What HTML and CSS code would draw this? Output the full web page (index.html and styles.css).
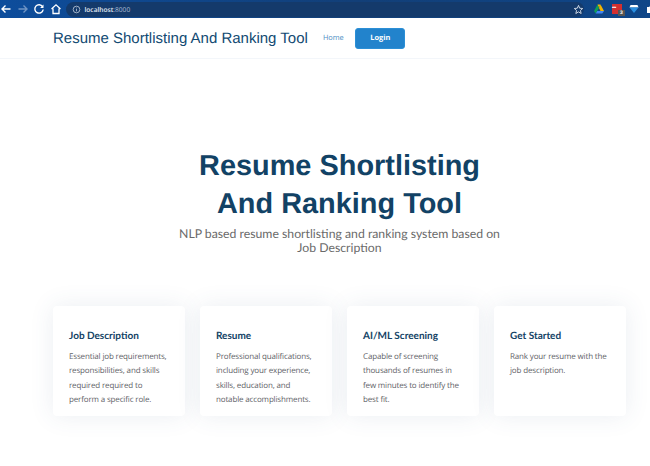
FILE: index.html
```html
<!DOCTYPE html>
<html lang="en">
<head>
<meta charset="utf-8">
<title>Resume Shortlisting And Ranking Tool</title>
<link rel="stylesheet" href="styles.css">
</head>
<body>
<div class="chrome">
  <svg class="ico" viewBox="0 0 12 12"><path d="M10.500 6H2M5.500 2.500 2 6l3.500 3.500" fill="none" stroke="#fff" stroke-width="1.400"/></svg>
  <svg class="ico" viewBox="0 0 12 12"><path d="M1.500 6H10M6.500 2.500 10 6l-3.500 3.500" fill="none" stroke="#6f94c4" stroke-width="1.400"/></svg>
  <svg class="ico" viewBox="0 0 12 12"><path d="M9.600 3.700A4.200 4.200 0 1 0 10.200 6.500" fill="none" stroke="#fff" stroke-width="1.400"/><path d="M10.500 1.500v3.400H7.100z" fill="#fff"/></svg>
  <svg class="ico" viewBox="0 0 12 12"><path d="M1.500 6 6 1.800 10.500 6M3 5.500v5h6v-5" fill="none" stroke="#fff" stroke-width="1.300"/></svg>
  <div class="omni">
    <svg class="info" viewBox="0 0 10 10"><circle cx="5" cy="5" r="3.700" fill="none" stroke="#cfd9e6" stroke-width=".8"/><path d="M5 4.400v2.600M5 2.900v.8" stroke="#cfd9e6" stroke-width=".8"/></svg>
    <span class="url">localhost<span class="port">:8000</span></span>
    <svg class="star" viewBox="0 0 12 12"><path d="M6 1.500 7.300 4.600l3.300.3-2.500 2.200.8 3.300L6 8.600l-2.900 1.800.8-3.300L1.400 4.900l3.300-.3z" fill="none" stroke="#d5deea" stroke-width="1"/></svg>
  </div>
  <div class="exts">
    <svg class="ext" viewBox="0 0 12 12"><path d="M4.500 1.500h3L6 5z" fill="#f4b400"/><path d="M4.500 1.500 1 8l1.700 2.500L6 5z" fill="#0f9d58"/><path d="M7.500 1.500 11 8H7.500L6 5z" fill="#f4b400"/><path d="M2.700 10.500h6.600L11 8H4.200z" fill="#4285f4"/></svg>
    <span class="lp"><span class="lp-dots">•••</span><span class="lp-badge">3</span></span>
    <svg class="ext" viewBox="0 0 12 12"><path d="M2.500 2h7l1 2.500H1.500z" fill="#fff"/><path d="M1.500 4.500h9L6 10z" fill="#2a8fe0"/></svg>
    <svg class="ext" viewBox="0 0 12 12"><path d="M2 4h2.500a1.500 1.500 0 1 1 3 0H10v6H2z" fill="#fff"/></svg>
  </div>
</div>
<header class="nav">
  <a class="brand">Resume Shortlisting And Ranking Tool</a>
  <a class="home">Home</a>
  <a class="login">Login</a>
</header>
<main class="page">
  <section class="hero">
    <h1>Resume Shortlisting<br>And Ranking Tool</h1>
    <p>NLP based resume shortlisting and ranking system based on Job Description</p>
  </section>
  <section class="cards">
    <article class="card">
      <h2>Job Description</h2>
      <p>Essential job requirements, responsibilities, and skills required required to perform a specific role.</p>
    </article>
    <article class="card">
      <h2>Resume</h2>
      <p>Professional qualifications, including your experience, skills, education, and notable accomplishments.</p>
    </article>
    <article class="card">
      <h2>AI/ML Screening</h2>
      <p>Capable of screening thousands of resumes in few minutes to identify the best fit.</p>
    </article>
    <article class="card">
      <h2>Get Started</h2>
      <p>Rank your resume with the job description.</p>
    </article>
  </section>
</main>
</body>
</html>
```
FILE: styles.css
```css
* { box-sizing: border-box; }
html, body { margin: 0; height: 100%; }
body {
  background: #fff;
  overflow: hidden;
  font-family: "Open Sans", sans-serif;
  text-rendering: geometricPrecision;
}

.chrome {
  height: 18px;
  display: flex;
  align-items: center;
  gap: 3px;
  background: linear-gradient(90deg, #0d4d9c 0%, #123f78 55%, #0f4688 100%);
}
.ico { width: 12px; height: 12px; flex: none; margin-right: 1.500px; }
.omni {
  flex: 1;
  height: 15px;
  display: flex;
  align-items: center;
  gap: 3.500px;
  padding: 0 0 0 6px;
  border-radius: 8px;
  background: #143a6b;
}
.info { width: 9px; height: 9px; }
.url { font: 600 6.600px "Open Sans", sans-serif; color: #e6edf5; flex: 1; }
.port { color: #a9bcd4; font-weight: 400; }
.star { width: 11px; height: 11px; }
.exts { display: flex; align-items: center; gap: 5px; width: 63px; padding-left: 6px; flex: none; }
.ext { width: 12px; height: 12px; flex: none; }
.lp { position: relative; width: 10px; height: 10px; background: #d32f2f; flex: none; margin: 0 1px 0 2px; }
.lp-dots { display: block; color: #fff; font: 700 5px/9px "Liberation Sans", sans-serif; letter-spacing: -.5px; }
.lp-badge { position: absolute; left: 6px; top: 6px; width: 7px; height: 6px; background: #555; color: #fff; font: 700 5px/6px "Liberation Sans", sans-serif; text-align: center; }

.nav {
  height: 41px;
  display: flex;
  align-items: center;
  padding-left: 53px;
  border-bottom: 1px solid #f3f6fa;
}
.brand { font: 400 15px "Liberation Sans", sans-serif; color: #124a72; }
.home { margin-left: 15px; font-size: 7.400px; color: #4d8fc4; }
.login {
  margin-left: 11.500px;
  width: 50px;
  height: 21px;
  display: flex;
  align-items: center;
  justify-content: center;
  border: 1px solid #2b8fd6;
  border-radius: 3px;
  background: #2283cc;
  color: #fff;
  font-size: 7.400px;
  font-weight: 700;
}

.page { width: 573px; margin-left: 53px; }
.hero { padding-top: 89px; text-align: center; }
.hero h1 {
  margin: 0;
  font: 700 28.900px/37.500px "Liberation Sans", sans-serif;
  color: #124265;
}
.hero p {
  width: 330px;
  margin: 4px auto 0;
  font: 400 12.250px/14px Lato, sans-serif;
  color: #6a6a6a;
}

.cards {
  display: grid;
  grid-template-columns: repeat(4, 132px);
  gap: 15px;
  margin-top: 51px;
}
.card {
  height: 110px;
  padding: 22px 16px 0;
  background: #fff;
  border-radius: 4px;
  box-shadow: 0 0 24px rgba(60, 90, 130, .1);
}
.card h2 {
  margin: 0 0 6px;
  font: 700 10px/16px Lato, sans-serif;
  color: #124265;
}
.card p {
  margin: 0;
  font-size: 8px;
  letter-spacing: -.15px;
  line-height: 14.400px;
  color: #5f6368;
}
```
